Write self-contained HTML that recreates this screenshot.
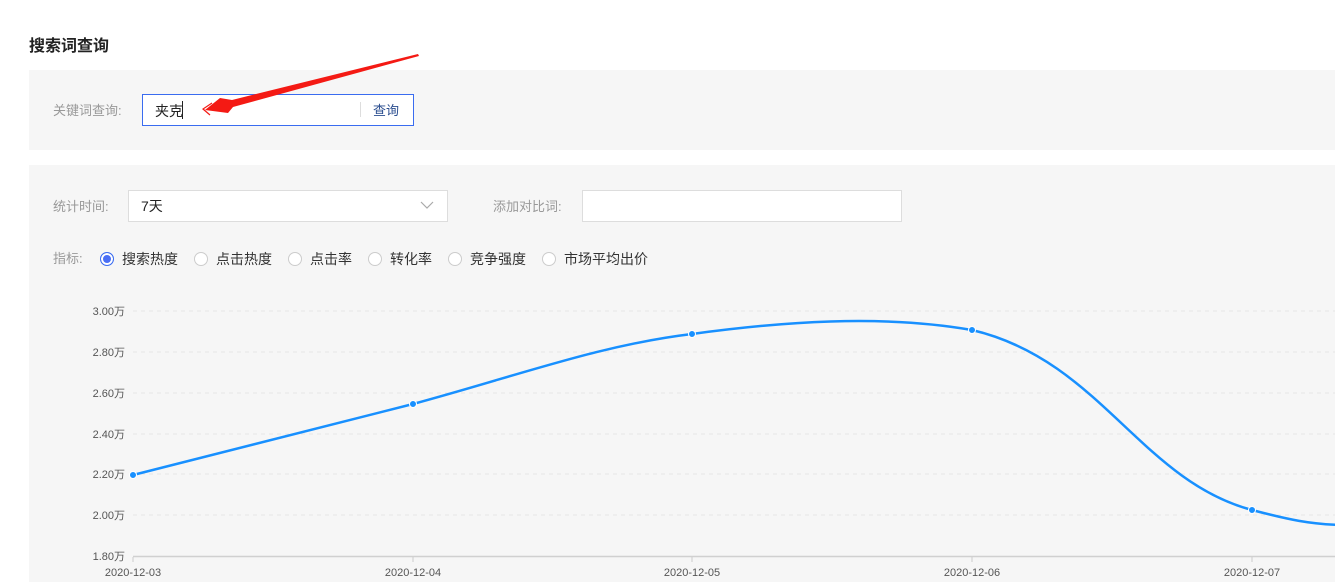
<!DOCTYPE html>
<html><head><meta charset="utf-8"><style>
*{margin:0;padding:0;box-sizing:border-box}
body{width:1335px;height:582px;background:#fff;font-family:"Liberation Sans","Noto Sans CJK SC",sans-serif;position:relative;overflow:hidden;font-size:13px;color:#333}
.a{position:absolute}
.panel{position:absolute;left:29px;right:0;background:#f6f6f6}
.lbl{color:#999;font-size:13px}
.radio{display:inline-block;width:14px;height:14px;border:1px solid #ccc;border-radius:50%;background:#fff;vertical-align:-2px;margin-right:8px}
</style></head><body>
<div class="a" style="left:29px;top:32px;font-size:16px;font-weight:bold;color:#222">搜索词查询</div>
<div class="panel" style="top:70px;height:80px"></div>
<div class="a lbl" style="left:53px;top:100px">关键词查询:</div>
<div class="a" style="left:142px;top:94px;width:272px;height:32px;border:1px solid #3a6cf0;background:#fff"></div>
<div class="a" style="left:155px;top:101px;font-size:14px;color:#222">夹克</div>
<div class="a" style="left:182px;top:101px;width:1px;height:18px;background:#222"></div>
<div class="a" style="left:360px;top:102px;width:1px;height:15px;background:#ddd"></div>
<div class="a" style="left:373px;top:100px;color:#2a4d8f">查询</div>

<div class="panel" style="top:165px;height:417px"></div>
<div class="a lbl" style="left:53px;top:196px">统计时间:</div>
<div class="a" style="left:128px;top:190px;width:320px;height:32px;border:1px solid #ddd;background:#fff"></div>
<div class="a" style="left:141px;top:196px;font-size:14px;color:#222">7天</div>
<svg class="a" style="left:420px;top:200px" width="14" height="10"><path d="M1 2 L7 8 L13 2" stroke="#aaa" fill="none" stroke-width="1.2"/></svg>
<div class="a lbl" style="left:493px;top:196px">添加对比词:</div>
<div class="a" style="left:582px;top:190px;width:320px;height:32px;border:1px solid #ddd;background:#fff"></div>

<div class="a lbl" style="left:53px;top:248px">指标:</div>
<div class="a" style="left:100px;top:249px;white-space:nowrap;font-size:14px;color:#333">
<span class="radio" style="border-color:#3a6cf0;box-shadow:inset 0 0 0 2px #fff;background:#4a6ef5"></span><span style="margin-right:16px">搜索热度</span><span class="radio"></span><span style="margin-right:16px">点击热度</span><span class="radio"></span><span style="margin-right:16px">点击率</span><span class="radio"></span><span style="margin-right:16px">转化率</span><span class="radio"></span><span style="margin-right:16px">竞争强度</span><span class="radio"></span><span>市场平均出价</span>
</div>

<svg class="a" style="left:0;top:0" width="1335" height="582">
<g stroke="#e6e6e6" stroke-dasharray="4 4" stroke-width="1">
<line x1="133" y1="311" x2="1335" y2="311"/><line x1="133" y1="352" x2="1335" y2="352"/><line x1="133" y1="393" x2="1335" y2="393"/><line x1="133" y1="434" x2="1335" y2="434"/><line x1="133" y1="474" x2="1335" y2="474"/><line x1="133" y1="515" x2="1335" y2="515"/>
</g>
<line x1="133" y1="556.5" x2="1335" y2="556.5" stroke="#d0d0d0" stroke-width="1.5"/>
<g stroke="#ccc"><line x1="133" y1="557" x2="133" y2="562"/><line x1="413" y1="557" x2="413" y2="562"/><line x1="692" y1="557" x2="692" y2="562"/><line x1="972" y1="557" x2="972" y2="562"/><line x1="1252" y1="557" x2="1252" y2="562"/></g>
<g font-family="Liberation Sans,Noto Sans CJK SC,sans-serif" font-size="11" fill="#555" text-anchor="end">
<text x="125" y="315">3.00万</text><text x="125" y="356">2.80万</text><text x="125" y="397">2.60万</text><text x="125" y="438">2.40万</text><text x="125" y="478">2.20万</text><text x="125" y="519">2.00万</text><text x="125" y="560">1.80万</text>
</g>
<g font-family="Liberation Sans,sans-serif" font-size="11" fill="#555" text-anchor="middle">
<text x="133" y="576">2020-12-03</text><text x="413" y="576">2020-12-04</text><text x="692" y="576">2020-12-05</text><text x="972" y="576">2020-12-06</text><text x="1252" y="576">2020-12-07</text>
</g>
<path d="M133 475 L413 404 C520 375 600 345 692 334 C780 322 880 314 972 330 C1100 360 1140 480 1252 510 C1290 520 1310 524 1340 525" stroke="#1890ff" stroke-width="2.5" fill="none"/>
<g fill="#1890ff" stroke="#fff" stroke-width="1"><circle cx="133" cy="475" r="3.5"/><circle cx="413" cy="404" r="3.5"/><circle cx="692" cy="334" r="3.5"/><circle cx="972" cy="330" r="3.5"/><circle cx="1252" cy="510" r="3.5"/></g>
<polygon points="418,54 419,56 233,107 228,113 205,110 220,98 232,100" fill="#f41a14"/>
<path d="M212 103 L203 109 L210 115" stroke="#f41a14" stroke-width="1.2" fill="none"/>
</svg>
</body></html>
